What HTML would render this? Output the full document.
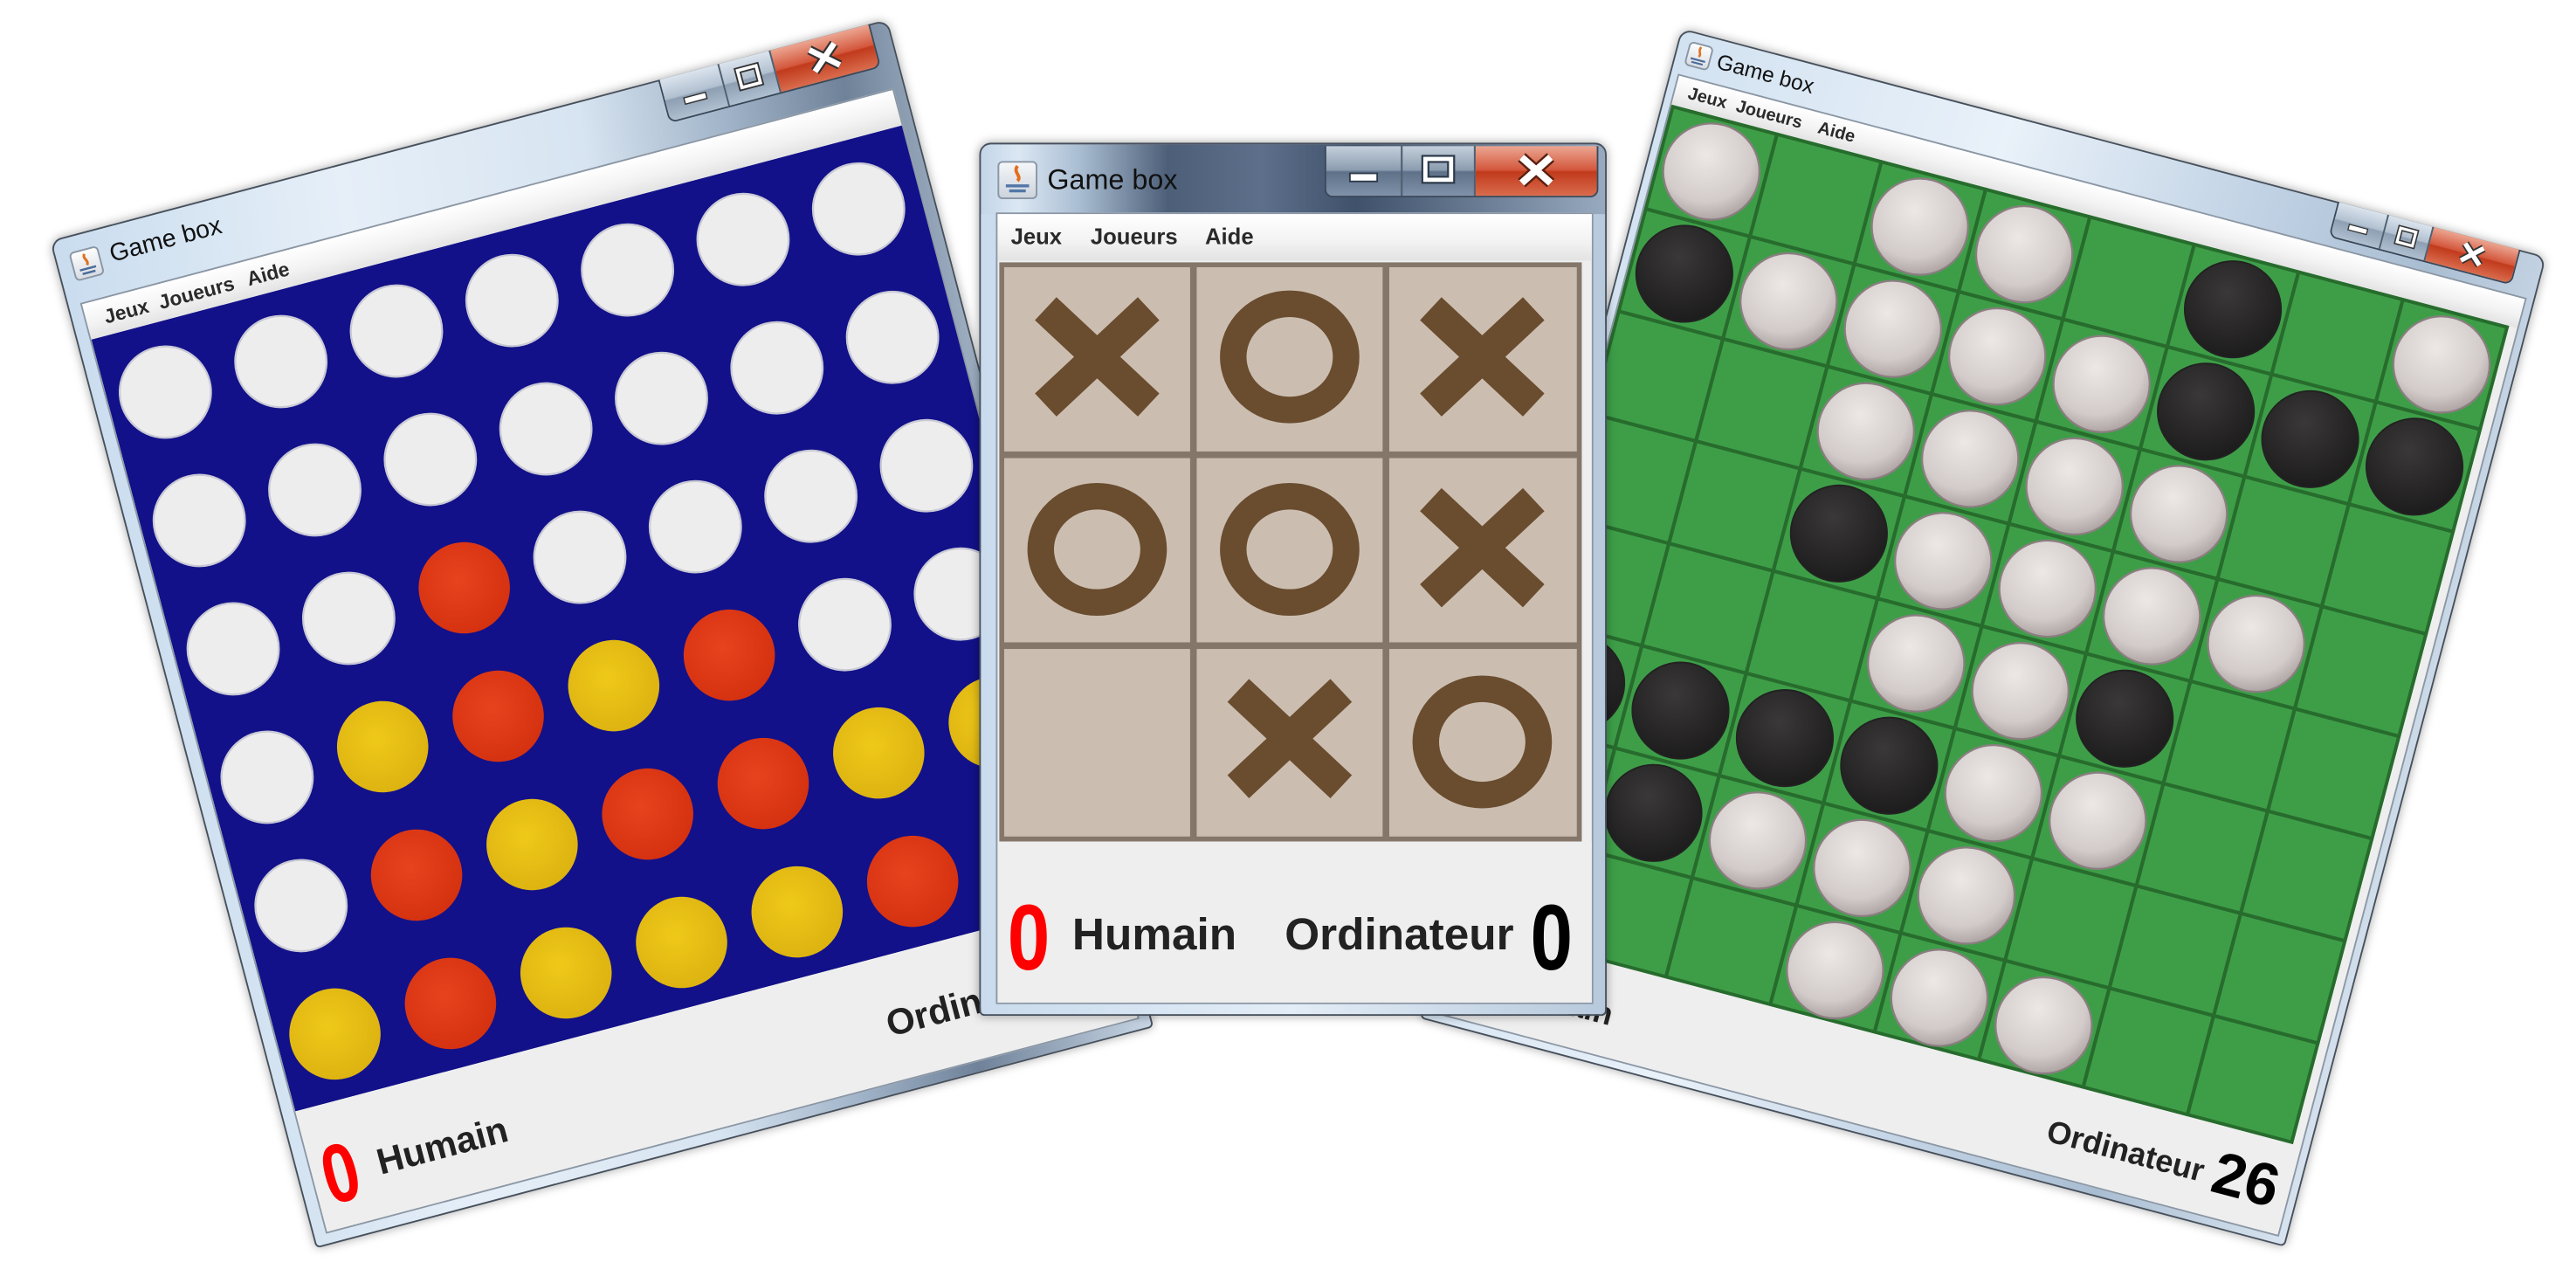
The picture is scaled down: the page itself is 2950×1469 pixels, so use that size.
<!DOCTYPE html>
<html><head><meta charset="utf-8">
<style>
*{margin:0;padding:0;box-sizing:border-box}
html,body{width:2950px;height:1469px;overflow:hidden;background:#fff}
#wrap{position:absolute;left:0;top:0;width:1552px;height:773px;transform:scale(1.9008,1.9004);transform-origin:0 0;font-family:"Liberation Sans",Arial,sans-serif}
.win{position:absolute;transform-origin:0 0;border:1px solid #46505c;border-radius:7px 7px 3px 3px;box-shadow:0 0 6px rgba(0,0,0,.35)}
.client{position:absolute;background:#eeeeee;border:1px solid #8b97a5;overflow:hidden}
.menu{position:absolute;left:0;right:0;top:0;background:linear-gradient(#ffffff,#f2f2f2 60%,#e3e3e3);font-weight:bold;color:#2a2a2a}
.menu span{position:absolute}
.title{position:absolute;color:#111;white-space:nowrap}
.btns{position:absolute;display:flex;border:1px solid #3b4858;border-top:none;border-radius:0 0 5px 5px;overflow:hidden}
.btns div{position:relative;border-left:1px solid #51606f}
.btns div:first-child{border-left:none}
.bm{background:linear-gradient(#dbe4ee,#b1c0d0 48%,#8e9fb3 52%,#aebfd0)}
.bc{background:linear-gradient(#eca692,#d3573c 48%,#c13a1c 52%,#d96c4d)}
.btns svg{position:absolute;left:0;top:0;width:100%;height:100%}
.ico{position:absolute;border:1px solid #8a96a4;border-radius:3px;background:linear-gradient(#fdfdfd,#d8dde3)}
.panel{position:absolute;left:0;right:0;background:#eeeeee;font-weight:bold;color:#222}
.panel span{position:absolute;white-space:nowrap}
.zero{font-weight:bold;display:inline-block;transform-origin:0 0}
</style></head><body><div id="wrap">

<svg width="0" height="0" style="position:absolute">
<defs>
<radialGradient id="gw" cx="40%" cy="35%" r="70%"><stop offset="0" stop-color="#ece8e6"/><stop offset=".7" stop-color="#d2cbc9"/><stop offset="1" stop-color="#a99f9e"/></radialGradient>
<radialGradient id="gb" cx="40%" cy="35%" r="70%"><stop offset="0" stop-color="#3a3838"/><stop offset="1" stop-color="#1c1b1b"/></radialGradient>
<radialGradient id="gr" cx="45%" cy="40%" r="65%"><stop offset="0" stop-color="#e8431f"/><stop offset="1" stop-color="#d3300f"/></radialGradient>
<radialGradient id="gy" cx="45%" cy="40%" r="65%"><stop offset="0" stop-color="#efc919"/><stop offset="1" stop-color="#dbb110"/></radialGradient>
</defs></svg>

<!-- LEFT WINDOW: Connect four -->
<div class="win" style="left:30px;top:145px;width:522px;height:628px;transform:rotate(-14.8deg);background:linear-gradient(97deg,#c9dcee 0%,#e6eff8 30%,#d7e4f1 55%,#9fb2c7 70%,#6f8299 82%,#c8d6e5 100%)">
  <div class="ico" style="left:8px;top:9px;width:18px;height:18px"><svg width="16" height="16"><path d="M8 2 C6 5 10 6 8 9" stroke="#e07020" stroke-width="1.6" fill="none"/><path d="M3 11 h10 M4 13.5 h8" stroke="#4a6a9a" stroke-width="1.3"/></svg></div>
  <div class="title" style="left:32px;top:8px;font-size:15px">Game box</div>
  <div class="btns" style="left:378px;top:-1px;height:27px">
    <div class="bm" style="width:36px"><svg viewBox="0 0 36 27"><rect x="11" y="15" width="14" height="4" fill="#fff" stroke="#333" stroke-width=".8"/></svg></div>
    <div class="bm" style="width:32px"><svg viewBox="0 0 32 27"><rect x="10" y="7" width="12" height="11" fill="none" stroke="#333" stroke-width="4"/><rect x="10" y="7" width="12" height="11" fill="none" stroke="#fff" stroke-width="2"/></svg></div>
    <div class="bc" style="width:62px"><svg viewBox="0 0 62 27"><path d="M23 6 L39 20 M39 6 L23 20" stroke="#333" stroke-width="6"/><path d="M23 6 L39 20 M39 6 L23 20" stroke="#fff" stroke-width="3.6"/></svg></div>
  </div>
  <div class="client" style="left:7px;top:40px;width:507px;height:580px">
    <div class="menu" style="height:22px;font-size:12px"><span style="left:11px;top:4px">Jeux</span><span style="left:45px;top:4px">Joueurs</span><span style="left:100px;top:4px">Aide</span></div>
    <svg style="position:absolute;left:0;top:22px" width="507" height="481">
      <rect width="507" height="481" fill="#121189"/>
      <g fill="#ededed" stroke="#c9c9d6" stroke-width="1.2">
        <circle cx="35" cy="42" r="27.5"/><circle cx="107" cy="42" r="27.5"/><circle cx="179" cy="42" r="27.5"/><circle cx="251" cy="42" r="27.5"/><circle cx="323" cy="42" r="27.5"/><circle cx="395" cy="42" r="27.5"/><circle cx="467" cy="42" r="27.5"/>
        <circle cx="35" cy="122" r="27.5"/><circle cx="107" cy="122" r="27.5"/><circle cx="179" cy="122" r="27.5"/><circle cx="251" cy="122" r="27.5"/><circle cx="323" cy="122" r="27.5"/><circle cx="395" cy="122" r="27.5"/><circle cx="467" cy="122" r="27.5"/>
        <circle cx="35" cy="202" r="27.5"/><circle cx="107" cy="202" r="27.5"/><circle cx="251" cy="202" r="27.5"/><circle cx="323" cy="202" r="27.5"/><circle cx="395" cy="202" r="27.5"/><circle cx="467" cy="202" r="27.5"/>
        <circle cx="35" cy="282" r="27.5"/><circle cx="395" cy="282" r="27.5"/><circle cx="467" cy="282" r="27.5"/>
        <circle cx="35" cy="362" r="27.5"/>
      </g>
      <g fill="url(#gr)">
        <circle cx="179" cy="202" r="27.5"/><circle cx="179" cy="282" r="27.5"/><circle cx="323" cy="282" r="27.5"/>
        <circle cx="107" cy="362" r="27.5"/><circle cx="251" cy="362" r="27.5"/><circle cx="323" cy="362" r="27.5"/>
        <circle cx="107" cy="442" r="27.5"/><circle cx="395" cy="442" r="27.5"/><circle cx="467" cy="442" r="27.5"/>
      </g>
      <g fill="url(#gy)">
        <circle cx="107" cy="282" r="27.5"/><circle cx="251" cy="282" r="27.5"/>
        <circle cx="179" cy="362" r="27.5"/><circle cx="395" cy="362" r="27.5"/><circle cx="467" cy="362" r="27.5"/>
        <circle cx="35" cy="442" r="27.5"/><circle cx="179" cy="442" r="27.5"/><circle cx="251" cy="442" r="27.5"/><circle cx="323" cy="442" r="27.5"/>
      </g>
    </svg>
    <div class="panel" style="top:503px;height:77px">
      <span style="left:6px;top:18px;color:#f00;font-size:50px;line-height:1"><span class="zero" style="position:static;transform:scaleX(.78)">0</span></span>
      <span style="left:40px;top:30px;font-size:22px">Humain</span>
      <span style="left:358px;top:28px;font-size:22px">Ordinateur</span>
      <span style="left:478px;top:18px;color:#000;font-size:50px;line-height:1">0</span>
    </div>
  </div>
</div>

<!-- RIGHT WINDOW: Othello -->
<div class="win" style="left:1013px;top:17px;width:539px;height:617px;transform:rotate(14.8deg);background:linear-gradient(95deg,#d2e2f1 0%,#e9f1f9 35%,#c3d4e6 60%,#a9bdd2 80%,#d7e3ef 100%)">
  <div class="ico" style="left:6px;top:5px;width:15px;height:15px"><svg width="13" height="13"><path d="M6.5 1 C5 4 8 5 6.5 7" stroke="#e07020" stroke-width="1.4" fill="none"/><path d="M2 9 h9 M3 11 h7" stroke="#4a6a9a" stroke-width="1.1"/></svg></div>
  <div class="title" style="left:25px;top:5px;font-size:13px">Game box</div>
  <div class="btns" style="left:408px;top:-1px;height:22px">
    <div class="bm" style="width:30px"><svg viewBox="0 0 30 22"><rect x="9" y="12" width="12" height="3.5" fill="#fff" stroke="#333" stroke-width=".7"/></svg></div>
    <div class="bm" style="width:28px"><svg viewBox="0 0 28 22"><rect x="9" y="6" width="10" height="9" fill="none" stroke="#333" stroke-width="3.5"/><rect x="9" y="6" width="10" height="9" fill="none" stroke="#fff" stroke-width="1.8"/></svg></div>
    <div class="bc" style="width:54px"><svg viewBox="0 0 54 22"><path d="M21 5 L33 16 M33 5 L21 16" stroke="#333" stroke-width="5"/><path d="M21 5 L33 16 M33 5 L21 16" stroke="#fff" stroke-width="3"/></svg></div>
  </div>
  <div class="client" style="left:4px;top:26px;width:529px;height:585px">
    <div class="menu" style="height:18px;font-size:10.5px"><span style="left:8px;top:3px">Jeux</span><span style="left:38px;top:3px">Joueurs</span><span style="left:89px;top:3px">Aide</span></div>
    <svg style="position:absolute;left:0;top:18px" width="522" height="510">
      <rect width="522" height="510" fill="#3e9e48"/>
      <g stroke="#276c2d" stroke-width="2.2">
        <path d="M0 1 H522 M0 64.75 H522 M0 128.5 H522 M0 192.25 H522 M0 256 H522 M0 319.75 H522 M0 383.5 H522 M0 447.25 H522 M0 509 H522"/>
        <path d="M1 0 V510 M66 0 V510 M131 0 V510 M196 0 V510 M261 0 V510 M326 0 V510 M391 0 V510 M456 0 V510 M521 0 V510"/>
      </g>
      <g fill="url(#gw)" stroke="#8a7e80" stroke-width="1.2">
        <circle cx="33.5" cy="32.9" r="29"/><circle cx="163.5" cy="32.9" r="29"/><circle cx="228.5" cy="32.9" r="29"/><circle cx="488.5" cy="32.9" r="29"/>
        <circle cx="98.5" cy="96.6" r="29"/><circle cx="163.5" cy="96.6" r="29"/><circle cx="228.5" cy="96.6" r="29"/><circle cx="293.5" cy="96.6" r="29"/>
        <circle cx="163.5" cy="160.4" r="29"/><circle cx="228.5" cy="160.4" r="29"/><circle cx="293.5" cy="160.4" r="29"/><circle cx="358.5" cy="160.4" r="29"/>
        <circle cx="228.5" cy="224.1" r="29"/><circle cx="293.5" cy="224.1" r="29"/><circle cx="358.5" cy="224.1" r="29"/><circle cx="423.5" cy="224.1" r="29"/>
        <circle cx="228.5" cy="287.9" r="29"/><circle cx="293.5" cy="287.9" r="29"/>
        <circle cx="293.5" cy="351.6" r="29"/><circle cx="358.5" cy="351.6" r="29"/>
        <circle cx="163.5" cy="415.4" r="29"/><circle cx="228.5" cy="415.4" r="29"/><circle cx="293.5" cy="415.4" r="29"/>
        <circle cx="228.5" cy="479.1" r="29"/><circle cx="293.5" cy="479.1" r="29"/><circle cx="358.5" cy="479.1" r="29"/>
      </g>
      <g fill="url(#gb)" stroke="#222" stroke-width="1">
        <circle cx="358.5" cy="32.9" r="29"/>
        <circle cx="33.5" cy="96.6" r="29"/><circle cx="358.5" cy="96.6" r="29"/><circle cx="423.5" cy="96.6" r="29"/><circle cx="488.5" cy="96.6" r="29"/>
        <circle cx="163.5" cy="224.1" r="29"/>
        <circle cx="358.5" cy="287.9" r="29"/>
        <circle cx="98.5" cy="351.6" r="29"/><circle cx="163.5" cy="351.6" r="29"/><circle cx="228.5" cy="351.6" r="29"/><circle cx="33.5" cy="351.6" r="29"/>
        <circle cx="98.5" cy="415.4" r="29"/>
      </g>
    </svg>
    <div class="panel" style="top:528px;height:57px">
      <span style="left:6px;top:12px;color:#f00;font-size:38px;line-height:1">0</span>
      <span style="left:36px;top:20px;font-size:19px">Humain</span>
      <span style="left:377px;top:20px;font-size:19px">Ordinateur</span>
      <span style="left:480px;top:10px;color:#000;font-size:36px;line-height:1">26</span>
    </div>
  </div>
</div>

<!-- MIDDLE WINDOW: Tic tac toe -->
<div class="win" style="left:590px;top:86px;width:378px;height:526px;background:linear-gradient(90deg,#c3d5e8 0%,#dbe7f3 6%,#a8bcd1 16%,#4d5f78 30%,#5d6f8a 45%,#3f516b 60%,#6a7c93 80%,#98aac0 100%)">
  <div style="position:absolute;left:0;right:0;top:42px;bottom:0;border-radius:0 0 3px 3px;background:linear-gradient(90deg,#c9dbed,#e3edf7 50%,#b7c9dc)"></div>
  <div class="ico" style="left:10px;top:10px;width:24px;height:23px;background:linear-gradient(#f4f6f9,#cdd4dc)"><svg width="22" height="21"><path d="M11 2 C8 6 14 8 11 11" stroke="#e46c1c" stroke-width="2" fill="none"/><path d="M4 14 h14 M6 17 h10" stroke="#5276a8" stroke-width="1.8"/></svg></div>
  <div class="title" style="left:40px;top:12px;font-size:17px">Game box</div>
  <div class="btns" style="left:207px;top:1px;height:31px">
    <div class="bm" style="width:45px;background:linear-gradient(#c4cfdb,#8c9db0 48%,#5f7189 52%,#7f92a9)"><svg viewBox="0 0 45 31"><rect x="14" y="17" width="17" height="5" fill="#fff" stroke="#2d3a4a" stroke-width="1"/></svg></div>
    <div class="bm" style="width:44px;background:linear-gradient(#c4cfdb,#8c9db0 48%,#5f7189 52%,#7f92a9)"><svg viewBox="0 0 44 31"><rect x="14" y="8" width="16" height="13" fill="none" stroke="#2d3a4a" stroke-width="5"/><rect x="14" y="8" width="16" height="13" fill="none" stroke="#fff" stroke-width="2.6"/></svg></div>
    <div class="bc" style="width:74px"><svg viewBox="0 0 74 31"><path d="M28 7 L46 23 M46 7 L28 23" stroke="#5a2010" stroke-width="7"/><path d="M28 7 L46 23 M46 7 L28 23" stroke="#fff" stroke-width="4.4"/></svg></div>
  </div>
  <div class="client" style="left:9px;top:41px;width:360px;height:477px">
    <div class="menu" style="height:28px;font-size:13.5px"><span style="left:8px;top:6px">Jeux</span><span style="left:56px;top:6px">Joueurs</span><span style="left:125px;top:6px">Aide</span></div>
    <svg style="position:absolute;left:1px;top:29px" width="351" height="349" viewBox="0 0 351 349">
      <rect width="351" height="349" fill="#85766a"/>
      <g fill="#cbbeb1">
        <rect x="3" y="3" width="112" height="111"/><rect x="119" y="3" width="112" height="111"/><rect x="235" y="3" width="113" height="111"/>
        <rect x="3" y="118" width="112" height="111"/><rect x="119" y="118" width="112" height="111"/><rect x="235" y="118" width="113" height="111"/>
        <rect x="3" y="233" width="112" height="113"/><rect x="119" y="233" width="112" height="113"/><rect x="235" y="233" width="113" height="113"/>
      </g>
      <g stroke="#6a4c2f" stroke-width="19" fill="none">
        <path d="M28 28 L90 86 M90 28 L28 86"/>
        <path d="M260 28 L322 86 M322 28 L260 86"/>
        <path d="M260 143 L322 201 M322 143 L260 201"/>
        <path d="M144 258 L206 316 M206 258 L144 316"/>
      </g>
      <g stroke="#6a4c2f" stroke-width="16" fill="none">
        <ellipse cx="175" cy="57" rx="34" ry="32"/>
        <ellipse cx="59" cy="173" rx="34" ry="32"/>
        <ellipse cx="175" cy="173" rx="34" ry="32"/>
        <ellipse cx="291" cy="289" rx="34" ry="32"/>
      </g>
    </svg>
    <div class="panel" style="top:378px;height:99px;color:#222">
      <span style="left:6px;top:30px;color:#f00;font-size:56px;line-height:1"><span class="zero" style="transform:scaleX(.82)">0</span></span>
      <span style="left:45px;top:41px;font-size:27px">Humain</span>
      <span style="left:173px;top:41px;font-size:27px">Ordinateur</span>
      <span style="left:321px;top:30px;color:#000;font-size:56px;line-height:1"><span class="zero" style="transform:scaleX(.82)">0</span></span>
    </div>
  </div>
</div>

</div></body></html>
